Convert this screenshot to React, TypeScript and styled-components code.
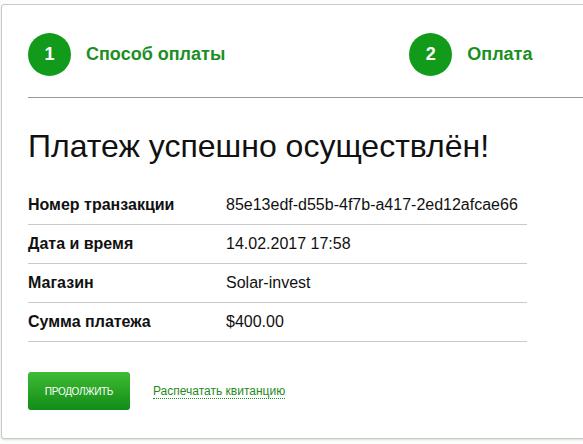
import React from "react";
import styled, { createGlobalStyle } from "styled-components";

const Global = createGlobalStyle`
  html, body { margin: 0; padding: 0; background: #fbfdfb; overflow: hidden; }
  body { font-family: "Liberation Sans", Arial, sans-serif; }
`;

const Page = styled.div`
  padding: 4px 0 0 1px;
  height: 444px;
  box-sizing: border-box;
  overflow: hidden;
`;

const Card = styled.div`
  width: 640px;
  height: 435px;
  box-sizing: border-box;
  background: #fff;
  border: 1px solid #c8c8c8;
  border-radius: 3px;
  box-shadow: 0 1px 2px rgba(0,0,0,0.12);
  padding-left: 26px;
`;

const Steps = styled.div`
  display: flex;
  align-items: flex-start;
  height: 93px;
  box-sizing: border-box;
  padding-top: 28px;
  border-bottom: 1px solid #9a9a9a;
`;

const Step = styled.div<{ $push?: boolean }>`
  display: flex;
  align-items: center;
  gap: 15px;
  margin-left: ${(p) => (p.$push ? "184px" : "0")};
`;

const Circle = styled.div`
  width: 43px;
  height: 43px;
  border-radius: 50%;
  background: #129b1a;
  color: #fff;
  font-weight: bold;
  font-size: 18px;
  display: flex;
  align-items: center;
  justify-content: center;
`;

const StepLabel = styled.span`
  color: #1b8f1f;
  font-weight: bold;
  font-size: 18px;
`;

const Title = styled.h1`
  margin: 30px 0 22px;
  font-weight: normal;
  font-size: 32px;
  line-height: 36px;
  color: #111;
`;

const Table = styled.div`
  width: 499px;
`;

const Row = styled.div`
  display: grid;
  grid-template-columns: 198px 1fr;
  align-items: center;
  height: 39px;
  box-sizing: border-box;
  border-bottom: 1px solid #c9c9c9;
  font-size: 16px;
  color: #111;
`;

const Label = styled.span`
  font-weight: bold;
`;

const Actions = styled.div`
  display: flex;
  align-items: center;
  gap: 23px;
  margin-top: 30px;
`;

const Button = styled.button`
  width: 102px;
  height: 38px;
  border: none;
  border-radius: 3px;
  background: linear-gradient(#40bb33, #118c18);
  color: #fff;
  font-family: "Liberation Sans", Arial, sans-serif;
  font-size: 10px;
  letter-spacing: -0.3px;
  text-transform: uppercase;
  cursor: pointer;
  padding: 0;
`;

const PrintLink = styled.a`
  color: #1f8a23;
  font-size: 12px;
  text-decoration: none;
  border-bottom: 1px dotted #1f8a23;
  line-height: 14px;
`;

const rows = [
  ["Номер транзакции", "85e13edf-d55b-4f7b-a417-2ed12afcae66"],
  ["Дата и время", "14.02.2017 17:58"],
  ["Магазин", "Solar-invest"],
  ["Сумма платежа", "$400.00"],
];

export default function App() {
  return (
    <>
      <Global />
      <Page>
        <Card>
          <Steps>
            <Step>
              <Circle>1</Circle>
              <StepLabel>Способ оплаты</StepLabel>
            </Step>
            <Step $push>
              <Circle>2</Circle>
              <StepLabel>Оплата</StepLabel>
            </Step>
          </Steps>
          <Title>Платеж успешно осуществлён!</Title>
          <Table>
            {rows.map(([l, v]) => (
              <Row key={l}>
                <Label>{l}</Label>
                <span>{v}</span>
              </Row>
            ))}
          </Table>
          <Actions>
            <Button>Продолжить</Button>
            <PrintLink href="#">Распечатать квитанцию</PrintLink>
          </Actions>
        </Card>
      </Page>
    </>
  );
}
